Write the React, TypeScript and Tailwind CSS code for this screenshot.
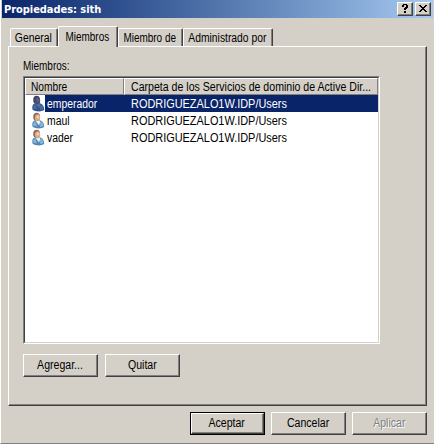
import React from 'react';

const raised =
  'border border-t-white border-l-white border-r-[#404040] border-b-[#404040] bg-[#d4d0c8]';
const innerShade = 'flex h-full w-full items-center justify-center border-r border-b border-[#808080]';

function UserIcon({ selected = false }: { selected?: boolean }) {
  const hair = selected ? '#3a4468' : '#8a6a56';
  const face = selected ? '#4a4f70' : '#d9a684';
  const light = selected ? '#565f80' : '#efcbb0';
  const body = selected ? '#34508a' : '#5488b4';
  const bodyLight = selected ? '#4670a8' : '#84b6d6';
  const shirt = selected ? '#4a70a8' : '#e4f0f6';
  return (
    <svg width="14" height="17" viewBox="0 0 14 17" className="shrink-0">
      <path d="M1.6 14.8C0.6 11.6 1.6 9.4 3.6 8.6L9 8.2C12 9.2 13.2 11.6 13.2 14.8C11 17 4.6 17 1.6 14.8Z" fill={body} />
      <path d="M2.2 13.6C2 11.6 2.6 10 4.2 9.3L6 14.6Z" fill={bodyLight} />
      <path d="M9.4 9.3C11.8 10.2 12.4 12 12.4 14.2L9 15Z" fill={bodyLight} />
      <path d="M4.4 8.8L8.8 8.4L9.2 10.2L8 13.4Z" fill={shirt} />
      <ellipse cx="5.6" cy="4.9" rx="3.4" ry="4.1" fill={hair} />
      <ellipse cx="6.5" cy="5.8" rx="2.7" ry="3.5" fill={face} />
      <ellipse cx="6.9" cy="5" rx="1.5" ry="1.8" fill={light} />
    </svg>
  );
}

function Button({
  label,
  primary = false,
  disabled = false,
}: {
  label: string;
  primary?: boolean;
  disabled?: boolean;
}) {
  return (
    <button className={`block h-[23px] w-[75px] ${primary ? 'border border-black' : ''}`}>
      <span
        className={`block h-full w-full ${
          primary ? 'border border-t-white border-l-white border-r-[#404040] border-b-[#404040]' : raised
        }`}
      >
        <span className={innerShade}>
          <span className={`scale-x-[.88] ${disabled ? 'text-[#808080] [text-shadow:1px_1px_0_#fff]' : ''}`}>
            {label}
          </span>
        </span>
      </span>
    </button>
  );
}

function Tab({
  label,
  size,
  scale,
  active = false,
}: {
  label: string;
  size: string;
  scale: string;
  active?: boolean;
}) {
  return (
    <div
      className={`${size} shrink-0 rounded-t-[2px] border-t border-r border-l border-t-white border-r-[#404040] border-l-white bg-[#d4d0c8] ${
        active ? 'relative z-10 h-[21px]' : 'h-[18px]'
      }`}
    >
      <div className={`flex h-full justify-center border-r border-[#808080] ${active ? 'pt-[4px]' : 'pt-[3px]'}`}>
        <span className={scale}>{label}</span>
      </div>
    </div>
  );
}

const members = ['emperador', 'maul', 'vader'];

export default function App() {
  return (
    <div className="flex h-[444px] w-[434px] flex-col overflow-hidden border-b border-l border-b-[#808080] border-l-white bg-[#d4d0c8] font-['Liberation_Sans',Arial,sans-serif] text-[12px] leading-[13px] whitespace-nowrap text-black">
      <header className="mr-px ml-px flex h-[18px] shrink-0 items-start bg-linear-to-r from-[#0a246a] to-[#a6caf0] pl-[2px]">
        <h1 className="mt-[3px] font-['DejaVu_Sans_Condensed','DejaVu_Sans',sans-serif] text-[11px] font-bold tracking-[-0.05px] text-white [font-stretch:condensed]">
          Propiedades: sith
        </h1>
        <div className="mt-[2px] mr-[2px] ml-auto flex gap-[2px]">
          <button className={`h-[14px] w-4 ${raised}`}>
            <span className={innerShade}>
              <svg width="8" height="10" viewBox="0 0 8 10" shapeRendering="crispEdges">
                <path d="M2 0h4v1h1v3h-1v1h-1v1h-2v-2h1v-1h1v-2h-2v2h-2v-2h1zM3 7h2v2h-2z" />
              </svg>
            </span>
          </button>
          <button className={`h-[14px] w-4 ${raised}`}>
            <span className={innerShade}>
              <svg width="8" height="7" viewBox="0 0 8 7" shapeRendering="crispEdges">
                <path d="M0 0h2v1h1v1h2v-1h1v-1h2v1h-1v1h-1v1h-1v1h1v1h1v1h1v1h-2v-1h-1v-1h-2v1h-1v1h-2v-1h1v-1h1v-1h1v-1h-1v-1h-1v-1h-1z" />
              </svg>
            </span>
          </button>
        </div>
      </header>

      <nav className="mt-2 ml-[9px] flex h-5 shrink-0 items-end">
        <Tab label="General" size="w-[48px]" scale="scale-x-[.87]" />
        <div className="-mb-px">
          <Tab label="Miembros" size="w-[60px]" scale="scale-x-[.83]" active />
        </div>
        <Tab label="Miembro de" size="w-[65px]" scale="scale-x-[.83]" />
        <Tab label="Administrado por" size="w-[90px]" scale="scale-x-[.86]" />
      </nav>

      <main className="ml-[7px] h-[360px] w-[419px] shrink-0 border border-t-white border-r-[#404040] border-b-[#404040] border-l-white">
        <div className="h-full border-r border-b border-[#808080] pl-[14px]">
          <p className="origin-left scale-x-[.83] pt-[13px]">Miembros:</p>
          <div className="mt-[3px] h-[268px] w-[357px] border border-t-[#808080] border-r-white border-b-white border-l-[#808080]">
            <div className="h-full border border-t-[#404040] border-r-[#d4d0c8] border-b-[#d4d0c8] border-l-[#404040] bg-white">
              <div className="flex h-[17px] bg-[#d4d0c8]">
                <div className="w-[99px] shrink-0 border border-t-white border-r-[#808080] border-b-[#808080] border-l-white pt-[2px] pl-[5px]">
                  <span className="block origin-left scale-x-[.85]">Nombre</span>
                </div>
                <div className="min-w-0 flex-1 border border-t-white border-r-[#808080] border-b-[#808080] border-l-white pt-[2px] pl-[6px]">
                  <span className="inline-block origin-left scale-x-[.882]">
                    Carpeta de los Servicios de dominio de Active Dir...
                  </span>
                </div>
              </div>
              {members.map((name, i) => (
                <div key={name} className="flex h-[17px] pl-[6px]">
                  <UserIcon selected={i === 0} />
                  <div className={`flex flex-1 pt-[3px] pl-[2px] ${i === 0 ? 'bg-[#0a246a] text-white' : ''}`}>
                    <span className="w-[84px] origin-left scale-x-[.865]">{name}</span>
                    <span className="origin-left scale-x-[.91]">RODRIGUEZALO1W.IDP/Users</span>
                  </div>
                </div>
              ))}
            </div>
          </div>
          <div className="mt-[10px] flex gap-[7px]">
            <Button label="Agregar..." />
            <Button label="Quitar" />
          </div>
        </div>
      </main>

      <footer className="mt-[6px] mr-[7px] flex justify-end gap-[6px]">
        <Button label="Aceptar" primary />
        <Button label="Cancelar" />
        <Button label="Aplicar" disabled />
      </footer>
    </div>
  );
}
